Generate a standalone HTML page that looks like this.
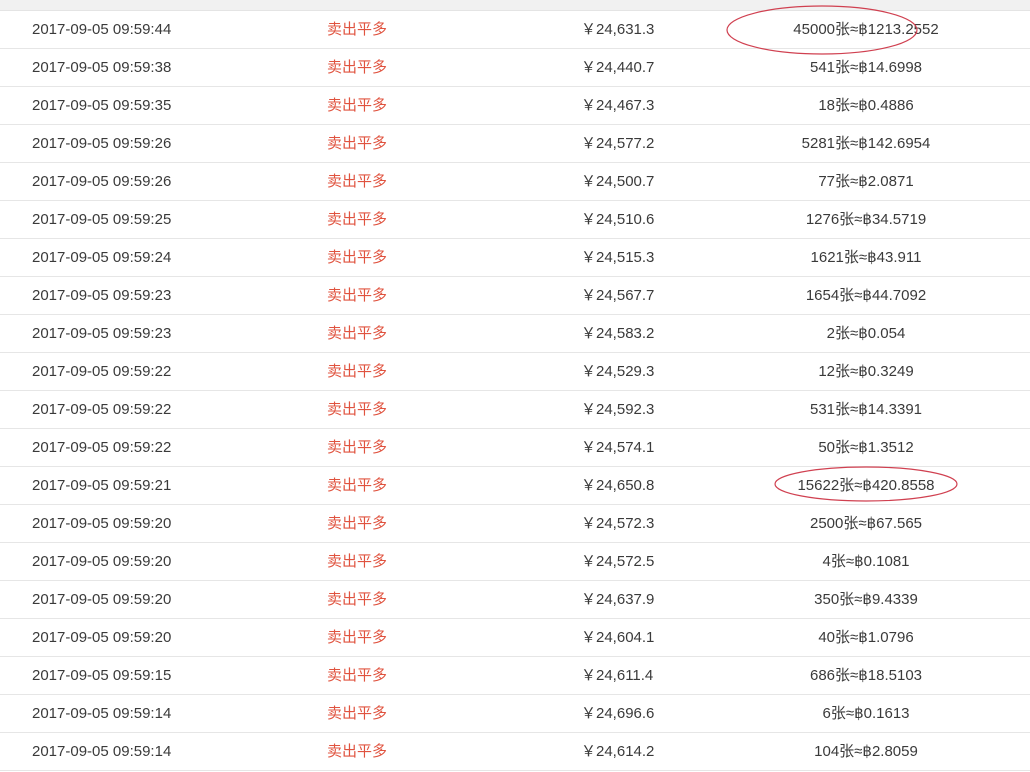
<!DOCTYPE html>
<html><head><meta charset="utf-8"><style>
body{margin:0;width:1030px;height:772px;overflow:hidden;background:#fff;font-family:"Liberation Sans","Noto Sans CJK SC",sans-serif;font-size:15px;color:#3a3a3a;position:relative}
.top{height:10px;background:#f1f1f1;border-bottom:1px solid #e4e4e4}
.r{height:37px;border-bottom:1px solid #e6e6e6;position:relative;line-height:37px}
.r span{position:absolute;top:0}
.d{left:32px}.t{left:327px;color:#e0533f}.p{left:581px}.a{left:700px;width:332px;text-align:center}
svg{position:absolute;left:0;top:0}
</style></head><body>
<div class="top"></div>
<div class="r"><span class="d">2017-09-05 09:59:44</span><span class="t">卖出平多</span><span class="p">￥24,631.3</span><span class="a">45000张≈฿1213.2552</span></div>
<div class="r"><span class="d">2017-09-05 09:59:38</span><span class="t">卖出平多</span><span class="p">￥24,440.7</span><span class="a">541张≈฿14.6998</span></div>
<div class="r"><span class="d">2017-09-05 09:59:35</span><span class="t">卖出平多</span><span class="p">￥24,467.3</span><span class="a">18张≈฿0.4886</span></div>
<div class="r"><span class="d">2017-09-05 09:59:26</span><span class="t">卖出平多</span><span class="p">￥24,577.2</span><span class="a">5281张≈฿142.6954</span></div>
<div class="r"><span class="d">2017-09-05 09:59:26</span><span class="t">卖出平多</span><span class="p">￥24,500.7</span><span class="a">77张≈฿2.0871</span></div>
<div class="r"><span class="d">2017-09-05 09:59:25</span><span class="t">卖出平多</span><span class="p">￥24,510.6</span><span class="a">1276张≈฿34.5719</span></div>
<div class="r"><span class="d">2017-09-05 09:59:24</span><span class="t">卖出平多</span><span class="p">￥24,515.3</span><span class="a">1621张≈฿43.911</span></div>
<div class="r"><span class="d">2017-09-05 09:59:23</span><span class="t">卖出平多</span><span class="p">￥24,567.7</span><span class="a">1654张≈฿44.7092</span></div>
<div class="r"><span class="d">2017-09-05 09:59:23</span><span class="t">卖出平多</span><span class="p">￥24,583.2</span><span class="a">2张≈฿0.054</span></div>
<div class="r"><span class="d">2017-09-05 09:59:22</span><span class="t">卖出平多</span><span class="p">￥24,529.3</span><span class="a">12张≈฿0.3249</span></div>
<div class="r"><span class="d">2017-09-05 09:59:22</span><span class="t">卖出平多</span><span class="p">￥24,592.3</span><span class="a">531张≈฿14.3391</span></div>
<div class="r"><span class="d">2017-09-05 09:59:22</span><span class="t">卖出平多</span><span class="p">￥24,574.1</span><span class="a">50张≈฿1.3512</span></div>
<div class="r"><span class="d">2017-09-05 09:59:21</span><span class="t">卖出平多</span><span class="p">￥24,650.8</span><span class="a">15622张≈฿420.8558</span></div>
<div class="r"><span class="d">2017-09-05 09:59:20</span><span class="t">卖出平多</span><span class="p">￥24,572.3</span><span class="a">2500张≈฿67.565</span></div>
<div class="r"><span class="d">2017-09-05 09:59:20</span><span class="t">卖出平多</span><span class="p">￥24,572.5</span><span class="a">4张≈฿0.1081</span></div>
<div class="r"><span class="d">2017-09-05 09:59:20</span><span class="t">卖出平多</span><span class="p">￥24,637.9</span><span class="a">350张≈฿9.4339</span></div>
<div class="r"><span class="d">2017-09-05 09:59:20</span><span class="t">卖出平多</span><span class="p">￥24,604.1</span><span class="a">40张≈฿1.0796</span></div>
<div class="r"><span class="d">2017-09-05 09:59:15</span><span class="t">卖出平多</span><span class="p">￥24,611.4</span><span class="a">686张≈฿18.5103</span></div>
<div class="r"><span class="d">2017-09-05 09:59:14</span><span class="t">卖出平多</span><span class="p">￥24,696.6</span><span class="a">6张≈฿0.1613</span></div>
<div class="r"><span class="d">2017-09-05 09:59:14</span><span class="t">卖出平多</span><span class="p">￥24,614.2</span><span class="a">104张≈฿2.8059</span></div>
<svg width="1030" height="772"><ellipse cx="822" cy="30" rx="95" ry="24" fill="none" stroke="#d04050" stroke-width="1.2"/><ellipse cx="866" cy="484" rx="91" ry="17" fill="none" stroke="#d04050" stroke-width="1.2"/></svg>
</body></html>
